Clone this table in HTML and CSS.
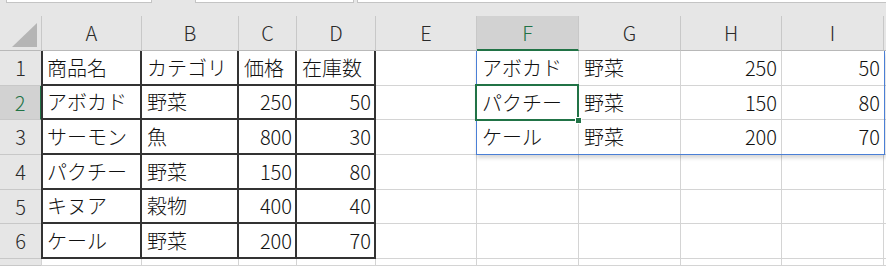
FILE: index.html
```html
<!DOCTYPE html>
<html lang="ja">
<head>
<meta charset="utf-8">
<link rel="stylesheet" href="styles.css">
</head>
<body>
<div class="app">
  <div class="topbar">
    <div class="tbox tb1"></div>
    <div class="tbox tb2"></div>
    <div class="tbox tb3"></div>
  </div>
  <div class="sheet">
    <!-- header row -->
    <div class="hd corner"><svg width="25" height="24" viewBox="0 0 25 24"><polygon points="25,0 25,24 0,24" fill="#b5b5b5"/></svg></div>
    <div class="hd ca">A</div>
    <div class="hd">B</div>
    <div class="hd">C</div>
    <div class="hd">D</div>
    <div class="hd">E</div>
    <div class="hd act-col">F</div>
    <div class="hd">G</div>
    <div class="hd">H</div>
    <div class="hd">I</div>
    <div class="hd last"></div>

    <!-- floating picture over F1:I3 -->
    <div class="pic">
      <div class="pc">アボカド</div><div class="pc">野菜</div><div class="pc num">250</div><div class="pc num end">50</div>
      <div class="pc sel-cell">パクチー<span class="sel"><span class="handle"></span></span></div><div class="pc">野菜</div><div class="pc num">150</div><div class="pc num end">80</div>
      <div class="pc bot">ケール</div><div class="pc bot">野菜</div><div class="pc num bot">200</div><div class="pc num end bot">70</div>
    </div>

    <!-- row 1 -->
    <div class="rh">1</div>
    <div class="c t ca">商品名</div><div class="c t">カテゴリ</div><div class="c t">価格</div><div class="c t">在庫数</div>
    <div class="c"></div><div class="c last"></div>

    <!-- row 2 -->
    <div class="rh act-row">2</div>
    <div class="c t ca">アボカド</div><div class="c t">野菜</div><div class="c t num">250</div><div class="c t num">50</div>
    <div class="c"></div><div class="c last"></div>

    <!-- row 3 -->
    <div class="rh">3</div>
    <div class="c t ca">サーモン</div><div class="c t">魚</div><div class="c t num">800</div><div class="c t num">30</div>
    <div class="c"></div><div class="c last"></div>

    <!-- row 4 -->
    <div class="rh">4</div>
    <div class="c t ca">パクチー</div><div class="c t">野菜</div><div class="c t num">150</div><div class="c t num">80</div>
    <div class="c"></div><div class="c"></div><div class="c"></div><div class="c"></div><div class="c"></div><div class="c last"></div>

    <!-- row 5 -->
    <div class="rh">5</div>
    <div class="c t ca">キヌア</div><div class="c t">穀物</div><div class="c t num">400</div><div class="c t num">40</div>
    <div class="c"></div><div class="c"></div><div class="c"></div><div class="c"></div><div class="c"></div><div class="c last"></div>

    <!-- row 6 -->
    <div class="rh">6</div>
    <div class="c t ca">ケール</div><div class="c t">野菜</div><div class="c t num">200</div><div class="c t num">70</div>
    <div class="c"></div><div class="c"></div><div class="c"></div><div class="c"></div><div class="c"></div><div class="c last"></div>

    <!-- row 7 -->
    <div class="rh"></div>
    <div class="c ca"></div><div class="c"></div><div class="c"></div><div class="c"></div>
    <div class="c"></div><div class="c"></div><div class="c"></div><div class="c"></div><div class="c"></div><div class="c last"></div>
  </div>
</div>
</body>
</html>
```

FILE: styles.css
```css
* { box-sizing: border-box; margin: 0; padding: 0; }
html, body { width: 886px; height: 266px; overflow: hidden; background: #fff; }
body {
  font-family: "Noto Sans CJK JP", "Noto Sans", sans-serif;
  font-size: 20px;
  font-weight: 300;
  color: #111;
}
.app { width: 886px; height: 266px; display: flex; flex-direction: column; background: #e6e6e6; }

.topbar { height: 16px; display: flex; align-items: flex-start; flex: none; }
.tbox { height: 3px; background: #fff; border: 1px solid #c4c4c4; border-top: none; }
.tb1 { margin-left: 6px; width: 146px; }
.tb2 { margin-left: 43px; width: 159px; }
.tb3 { margin-left: 3px; flex: 1; border-right: none; }

.sheet {
  flex: 1;
  display: grid;
  grid-template-columns: 41px 101px 97px 58px 79px 101px 102px 102px 101px 102px 1fr;
  grid-template-rows: 35px 35px 34px 35px 35px 34px 35px 1fr;
  background: #fff;
}

.hd {
  background: #e6e6e6;
  border-right: 1px solid #c8c8c8;
  border-bottom: 1px solid #b9b9b9;
  display: flex; align-items: center; justify-content: center;
  color: #2a2a2a;
  line-height: 1;
}
.hd.corner { border-right: none; align-items: flex-end; justify-content: flex-start; padding: 0 0 3px 12px; }
.hd.corner svg { display: block; }
.hd.ca { border-left: 1px solid #c8c8c8; }
.hd.last { border-right: none; }
.hd.act-col { background: #d2d2d2; color: #217346; border-bottom: 2px solid #217346; }

.rh {
  background: #e6e6e6;
  border-bottom: 1px solid #c8c8c8;
  display: flex; align-items: center; justify-content: center;
  color: #2a2a2a;
  line-height: 1;
}
.rh.act-row { background: #d2d2d2; color: #217346; border-right: 1px solid #217346; }

.c {
  border-right: 1px solid #d4d4d4;
  border-bottom: 1px solid #d4d4d4;
  display: flex; align-items: center;
  padding: 0 4px 0 5px;
  line-height: 1;
  white-space: nowrap;
}
.c.ca { border-left: 1px solid #d4d4d4; }
.c.last { border-right: none; }
.c.t { border-right: 2px solid #333; border-bottom: 2px solid #333; padding-right: 3px; }
.c.t.ca { border-left: 2px solid #333; padding-left: 4px; }
.num { justify-content: flex-end; }

.pic {
  grid-column: 7 / 11;
  grid-row: 2 / 5;
  margin-left: -1px;
  margin-right: -1px;
  border: 1px solid #4a7fd6;
  border-top: none;
  background: #fff;
  box-shadow: 1px 3px 4px rgba(0, 0, 0, 0.16);
  position: relative;
  z-index: 1;
  display: grid;
  grid-template-columns: 102px 102px 101px 1fr;
  grid-template-rows: 35px 34px 1fr;
}
.pc {
  border-right: 1px solid #d4d4d4;
  border-bottom: 1px solid #d4d4d4;
  display: flex; align-items: center;
  padding: 0 4px 0 5px;
  line-height: 1;
  white-space: nowrap;
}
.pc.end { border-right: none; }
.pc.bot { border-bottom: none; }
.sel-cell { position: relative; }
.sel {
  position: absolute;
  left: -2px; top: -2px;
  width: 104px; height: 37px;
  border: 2px solid #217346;
}
.handle {
  position: absolute;
  right: -5px; bottom: -5px;
  width: 7px; height: 7px;
  background: #217346;
  border: 1px solid #fff;
}
```
